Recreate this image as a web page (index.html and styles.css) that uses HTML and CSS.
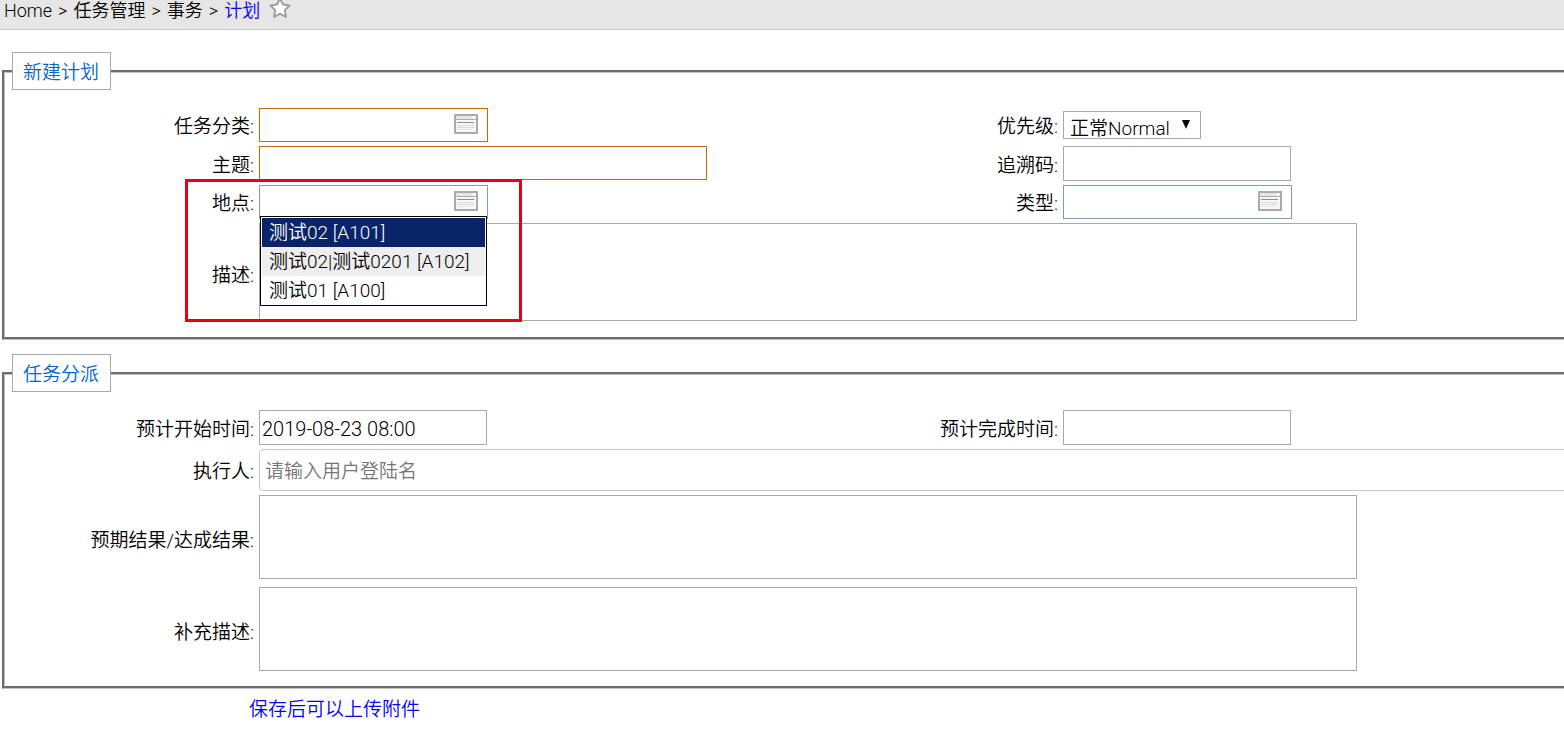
FILE: index.html
```html
<!DOCTYPE html>
<html lang="zh-CN">
<head>
<meta charset="utf-8">
<meta name="viewport" content="width=device-width, initial-scale=1">
<title>计划</title>
<link rel="stylesheet" href="styles.css">
</head>
<body>
<svg class="defs" aria-hidden="true">
  <symbol id="window" viewBox="0 0 24 20">
    <rect x="1" y="1" width="22" height="18" fill="#f7f7f7" stroke="#ababab" stroke-width="2"/>
    <rect x="2" y="2" width="20" height="3" fill="#e6e6e6"/>
    <path d="M1 5.500H23" stroke="#ababab"/>
    <path d="M20 2v3" stroke="#fff" stroke-width="2"/>
    <path d="M3 8.500H20" stroke="#8c8c8c"/>
    <path d="M3 11.500H20M3 13.500H20" stroke="#dadada"/>
    <path d="M3 15.500H17" stroke="#e6e6e6"/>
  </symbol>
</svg>
<nav class="crumbs">
  <a class="crumb" href="#">Home</a><span>&gt;</span><a class="crumb" href="#">任务管理</a><span>&gt;</span><a class="crumb" href="#">事务</a><span>&gt;</span><a class="crumb current" href="#">计划</a>
  <button class="star" type="button" aria-label="收藏"><svg width="24" height="22" viewBox="0 0 24 22"><path d="M12 1.500l3 6 6.500 1-4.700 4.700 1.100 6.600L12 16.700l-5.900 3.100 1.100-6.600L2.500 8.500l6.500-1z" fill="#fff" stroke="#a0a0a0" stroke-width="2" stroke-linejoin="round"/></svg></button>
</nav>
<form class="form">
  <fieldset class="group">
    <legend class="title">新建计划</legend>
    <div class="grid">
      <label class="label" for="category">任务分类:</label>
      <div class="picker"><input class="input required" id="category" type="text"><button class="pick" type="button" aria-label="选择任务分类"><svg width="24" height="20"><use href="#window"/></svg></button></div>
      <label class="label" for="priority">优先级:</label>
      <div class="choice"><select class="select" id="priority"><option>正常Normal</option></select><svg class="arrow" width="8" height="9" viewBox="0 0 8 9"><path d="M0 0h8L4 9z"/></svg></div>

      <label class="label" for="subject">主题:</label>
      <input class="input wide required" id="subject" type="text">
      <label class="label" for="trace">追溯码:</label>
      <input class="input tall" id="trace" type="text">

      <label class="label" for="place">地点:</label>
      <div class="picker"><input class="input lookup" id="place" type="text"><button class="pick" type="button" aria-label="选择地点"><svg width="24" height="20"><use href="#window"/></svg></button>
        <ul class="menu" role="listbox" aria-label="地点">
          <li class="option active" role="option" aria-selected="true">测试02 [A101]</li>
          <li class="option" role="option">测试02|测试0201 [A102]</li>
          <li class="option" role="option">测试01 [A100]</li>
        </ul>
        <div class="marker"></div>
      </div>
      <label class="label" for="type">类型:</label>
      <div class="picker"><input class="input lookup" id="type" type="text"><button class="pick" type="button" aria-label="选择类型"><svg width="24" height="20"><use href="#window"/></svg></button></div>

      <label class="label low" for="desc">描述:</label>
      <textarea class="input area large" id="desc"></textarea>
    </div>
  </fieldset>

  <fieldset class="group">
    <legend class="title">任务分派</legend>
    <div class="grid">
      <label class="label" for="start">预计开始时间:</label>
      <input class="input tall date" id="start" type="text" value="2019-08-23 08:00">
      <label class="label" for="end">预计完成时间:</label>
      <input class="input tall date" id="end" type="text">

      <label class="label" for="user">执行人:</label>
      <input class="input full" id="user" type="text" placeholder="请输入用户登陆名">

      <label class="label low" for="result">预期结果/达成结果:</label>
      <textarea class="input area" id="result"></textarea>

      <label class="label low spaced" for="extra">补充描述:</label>
      <textarea class="input area spaced" id="extra"></textarea>
    </div>
  </fieldset>
  <a class="upload" href="#">保存后可以上传附件</a>
</form>
</body>
</html>
```
FILE: styles.css
```css
* { box-sizing: border-box; }

body {
  margin: 0;
  overflow-x: hidden;
  background: #fff;
  color: #000;
  font: 350 19px/26px Roboto, "Noto Sans CJK SC", sans-serif;
}

input, select, textarea, button { font: inherit; color: inherit; }

.defs { position: absolute; width: 0; height: 0; }

.crumbs {
  display: flex;
  gap: 6px;
  height: 30px;
  padding-left: 4px;
  background: #e6e6e6;
  border-bottom: 1px solid #c8c8c8;
  font-size: 18px;
  line-height: 21px;
}

.crumb { color: #000; text-decoration: none; }
.current, .upload { color: #00f; text-decoration: none; }

.star {
  display: flex;
  height: 19px;
  margin-left: 2px;
  padding: 0;
  border: 0;
  background: none;
  align-items: flex-end;
}

.form {
  padding: 22px 0 12px 2px;
  overflow: hidden;
}

.group {
  min-width: 0;
  margin: 0 -48px 14px 0;
  padding: 18px 0 15px;
  border: 3px groove #c0c0c0;
}
.group:first-child { padding-bottom: 16px; }

.title {
  margin-left: 7px;
  padding: 7px 11px 3px 10px;
  border: 1px solid #a9a9a9;
  color: #0066cc;
}

.grid {
  display: grid;
  grid-template-columns: 250fr 546fr 250fr 546fr;
  gap: 4px;
  align-items: center;
}

.label { padding: 4px 1px 0 0; text-align: right; }
.low { padding-top: 8px; }

.input {
  display: block;
  width: 228px;
  height: 34px;
  margin: 0;
  padding: 4px 2px 2px;
  border: 1px solid #a9a9a9;
  border-radius: 0;
  background: #fff;
  outline: 0;
}

.tall { height: 35px; }
.date { font-size: 20px; }
.wide { width: 448px; align-self: start; }
.required { border-color: #c46a00; }
.lookup { border-color: #7f9db9; }

.area {
  grid-column: 2 / -1;
  width: 81.3%;
  height: 84px;
  resize: none;
}
.large { height: 98px; }
.spaced { margin-top: 4px; }

.full {
  grid-column: 2 / -1;
  width: 100%;
  height: 42px;
  padding: 2px 5px 0;
  border-color: #c4c4c4;
  border-radius: 4px;
}
.full::placeholder { color: #757575; }

.picker { position: relative; width: 229px; }
.picker .input { width: 100%; padding-right: 36px; }

.pick {
  position: absolute;
  top: 6px;
  right: 10px;
  display: flex;
  padding: 0;
  border: 0;
  background: none;
}

.menu {
  position: absolute;
  z-index: 1;
  top: 31px;
  left: 1px;
  width: 227px;
  margin: 0;
  padding: 1px 1px 0;
  border: 1px solid #000;
  background: #fff;
  list-style: none;
}
.option { padding: 0 7px; line-height: 29px; white-space: nowrap; }
.option:nth-child(even) { background: #eee; }
.option.active { background: #0a246a; color: #fff; }

.marker {
  position: absolute;
  z-index: 2;
  top: -6px;
  left: -74px;
  width: 337px;
  height: 143px;
  border: 3px solid #e60012;
  pointer-events: none;
}

.choice { position: relative; width: 138px; }
.select {
  display: block;
  width: 100%;
  height: 28px;
  padding: 4px 0 0 6px;
  border: 1px solid #a9a9a9;
  border-radius: 0;
  background: #fff;
  appearance: none;
}
.arrow { position: absolute; top: 9px; right: 11px; pointer-events: none; }

.upload {
  display: block;
  width: fit-content;
  margin: -6px 0 0 247px;
}
```
